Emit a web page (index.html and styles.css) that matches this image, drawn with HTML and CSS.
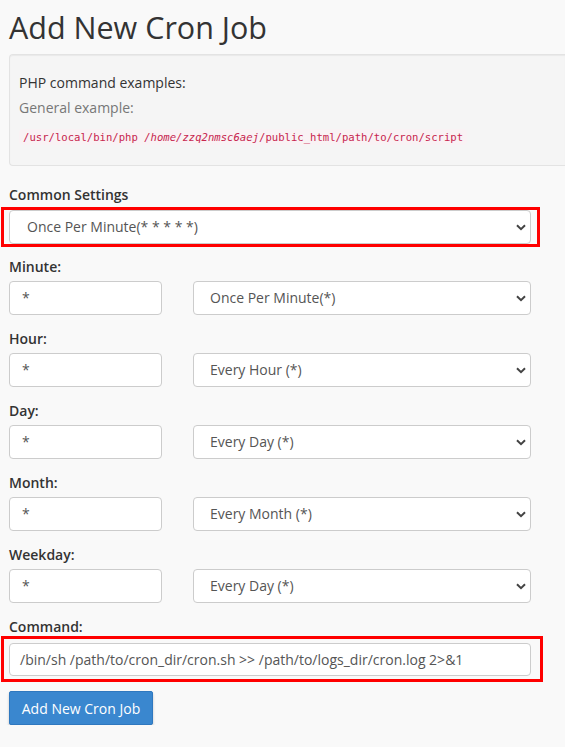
FILE: index.html
```html
<!DOCTYPE html>
<html>
<head>
<meta charset="utf-8">
<link rel="stylesheet" href="styles.css">
</head>
<body>
<div class="page">
  <h1 class="title">Add New Cron Job</h1>
  <div class="well">
    <p class="well-head">PHP command examples:</p>
    <p class="well-sub">General example:</p>
    <div class="well-code"><code>/usr/local/bin/php <em>/home/zzq2nmsc6aej</em>/public_html/path/to/cron/script</code></div>
  </div>

  <label class="lbl lbl-common">Common Settings</label>
  <div class="highlight hl-common">
    <div class="select select-wide">Once Per Minute(* * * * *)</div>
  </div>

  <div class="group">
    <label class="lbl">Minute:</label>
    <div class="pair">
      <div class="input">*</div>
      <div class="select">Once Per Minute(*)</div>
    </div>
  </div>
  <div class="group">
    <label class="lbl">Hour:</label>
    <div class="pair">
      <div class="input">*</div>
      <div class="select">Every Hour (*)</div>
    </div>
  </div>
  <div class="group">
    <label class="lbl">Day:</label>
    <div class="pair">
      <div class="input">*</div>
      <div class="select">Every Day (*)</div>
    </div>
  </div>
  <div class="group">
    <label class="lbl">Month:</label>
    <div class="pair">
      <div class="input">*</div>
      <div class="select">Every Month (*)</div>
    </div>
  </div>
  <div class="group">
    <label class="lbl">Weekday:</label>
    <div class="pair">
      <div class="input">*</div>
      <div class="select">Every Day (*)</div>
    </div>
  </div>

  <label class="lbl">Command:</label>
  <div class="highlight hl-command">
    <div class="input input-wide">/bin/sh /path/to/cron_dir/cron.sh &gt;&gt; /path/to/logs_dir/cron.log 2&gt;&amp;1</div>
  </div>

  <button class="btn">Add New Cron Job</button>
</div>
</body>
</html>
```
FILE: styles.css
```css
html, body {
  margin: 0;
  padding: 0;
  background: #f9f9f9;
}
body {
  font-family: "Open Sans", "Liberation Sans", sans-serif;
  font-size: 14px;
  line-height: 20px;
  color: #333;
}
.page {
  width: 522px;
  padding: 11px 0 0 9px;
}
.title {
  margin: 0 0 10px 0;
  font-size: 30.5px;
  font-weight: 400;
  line-height: 33px;
  color: #333;
}
.well {
  width: 556px;
  box-sizing: border-box;
  background: #f5f5f5;
  border: 1px solid #e3e3e3;
  border-right: none;
  border-radius: 4px 0 0 4px;
  padding: 18px 9px 18px 9px;
  box-shadow: inset 0 1px 1px rgba(0,0,0,0.05);
}
.well p {
  margin: 0;
}
.well-sub {
  margin-top: 5px !important;
  color: #777;
}
.well-code {
  margin-top: 8px;
  line-height: 20px;
}
.well-code code {
  font-family: "DejaVu Sans Mono", "Liberation Mono", monospace;
  font-size: 10.6px;
  color: #c7254e;
  background: #f9f2f4;
  padding: 2px 4px;
  border-radius: 4px;
}
.well-code em {
  font-style: italic;
}
.lbl {
  display: block;
  font-weight: 600;
  line-height: 20px;
  margin-bottom: 4px;
}
.lbl-common {
  margin-top: 19px;
  margin-bottom: 2px;
}
.highlight {
  border: 3px solid #f00;
  margin-left: -8px;
  margin-right: -9px;
  padding-left: 5px;
  padding-right: 6px;
}
.hl-common {
  padding-top: 0;
  padding-bottom: 0;
  margin-bottom: 10px;
}
.hl-command {
  margin-top: -5px;
  margin-right: -12px;
  padding-top: 4px;
  padding-bottom: 3px;
  padding-right: 9px;
}
.group {
  margin-bottom: 14px;
}
.pair {
  display: grid;
  grid-template-columns: 153px 338px;
  column-gap: 31px;
}
.input, .select {
  box-sizing: border-box;
  height: 34px;
  background: #fff;
  border: 1px solid #ccc;
  border-radius: 4px;
  color: #555;
  line-height: 32px;
  white-space: nowrap;
  overflow: hidden;
}
.input {
  padding-left: 12px;
}
.input-wide {
  padding-left: 10px;
  height: 33px;
  line-height: 31px;
}
.select {
  padding-left: 16px;
  background-image: url("data:image/svg+xml,%3Csvg xmlns='http://www.w3.org/2000/svg' width='10' height='7' viewBox='0 0 10 7'%3E%3Cpath d='M1 1.2 L5 5.2 L9 1.2' fill='none' stroke='%23444' stroke-width='2'/%3E%3C/svg%3E");
  background-repeat: no-repeat;
  background-position: right 4px center;
}
.select-wide {
  padding-left: 17px;
}
.btn {
  display: block;
  margin-top: 9px;
  height: 34px;
  width: 144px;
  padding: 0;
  font-family: "Open Sans", "Liberation Sans", sans-serif;
  font-size: 14px;
  color: #fff;
  background: #3a87cf;
  border: 1px solid #2f78bf;
  border-radius: 2px;
  box-shadow: 0 2px 3px rgba(0,0,0,0.2);
}
```
